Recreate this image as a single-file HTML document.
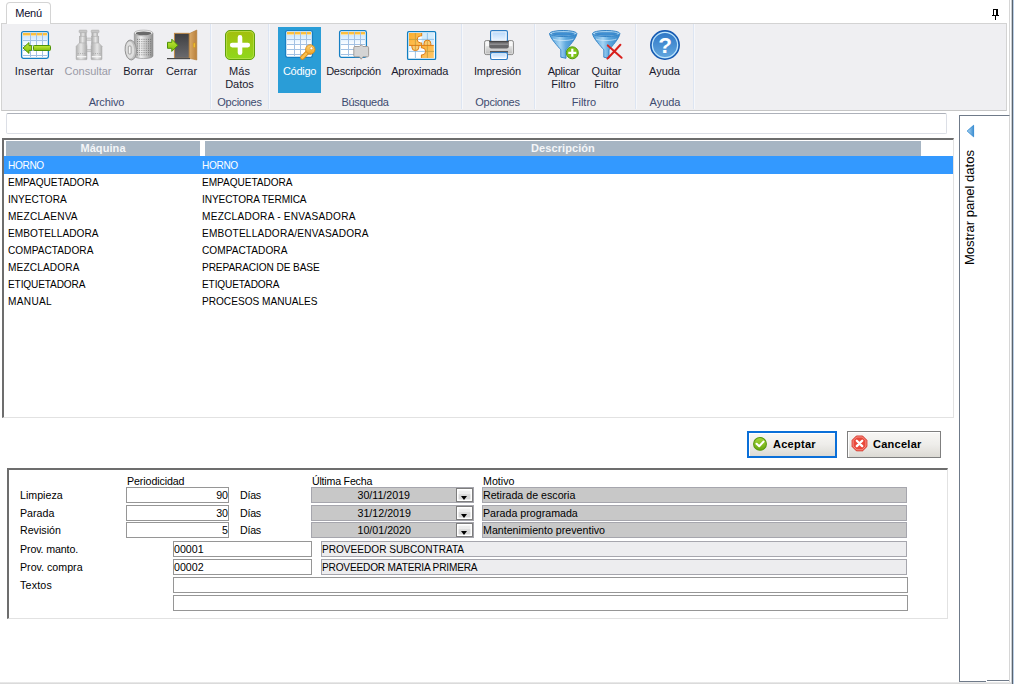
<!DOCTYPE html>
<html><head><meta charset="utf-8"><title>Máquinas</title>
<style>
html,body{margin:0;padding:0;}
body{width:1014px;height:684px;position:relative;overflow:hidden;background:#fff;font-family:"Liberation Sans",sans-serif;font-size:11px;color:#000;}
.abs{position:absolute;}
#tab{left:6px;top:2px;width:45px;height:22px;border:1px solid #d4d4d4;border-bottom:none;border-radius:4px 4px 0 0;background:#fff;box-sizing:border-box;z-index:2;}
#tab span{position:absolute;left:0;right:0;top:4px;text-align:center;font-size:11px;color:#0c0c2c;letter-spacing:-0.25px;}
#ribbon{left:1px;top:23px;width:1006px;height:88px;box-sizing:border-box;background:#efeff2;border:1px solid #d3d3d3;border-bottom:1px solid #c6c6c6;}
.rb{position:absolute;top:27px;height:66px;}
.rb .lbl{position:absolute;left:-20px;right:-20px;top:38px;text-align:center;line-height:13px;font-size:11px;color:#1a1a2e;white-space:nowrap;}
.rb svg{position:absolute;top:3px;left:50%;margin-left:-16px;}
.rb.sel{background:#2a9dd7;}
.rb.sel .lbl{color:#fff;}
.rb.dis .lbl{color:#9a9aa6;}
.gl{position:absolute;top:96px;height:13px;line-height:13px;font-size:11px;color:#3d4b70;text-align:center;white-space:nowrap;}
.sep{position:absolute;top:24px;height:85px;width:1px;background:#dde5f2;box-shadow:1px 0 0 #f6f7fa;}
#search{left:6px;top:113px;width:941px;height:21px;box-sizing:border-box;border:1px solid #dcdfe6;border-top-color:#adb1ba;border-radius:2px;background:#fff;}
#grid{left:2px;top:138px;width:952px;height:280px;box-sizing:border-box;border-left:2px solid #6d6d6d;border-top:2px solid #6d6d6d;border-bottom:1px solid #e2e2e2;border-right:1px solid #e2e2e2;background:#fff;}
.gh{position:absolute;top:141px;height:15px;background:#a6b5c3;color:#f4f6f8;font-weight:bold;font-size:11px;text-align:center;line-height:15px;letter-spacing:0.08px;}
.row{position:absolute;left:4px;width:949px;height:17px;line-height:19px;font-size:10.1px;white-space:nowrap;}
.row span{position:absolute;top:0;}
.row .c1{left:4px;} .row .c2{left:198px;}
.row.sel{background:#3399ff;color:#fff;}
.btn{position:absolute;top:431px;height:27px;box-sizing:border-box;border:1px solid #7f7f7f;background:linear-gradient(#f8f7f5,#eeedea 50%,#dcdad4);box-shadow:inset 1px 1px 0 #fff;font-weight:bold;font-size:11px;letter-spacing:0.27px;}
.btn span{position:absolute;top:6px;}
#panel{left:7px;top:468px;width:941px;height:151px;box-sizing:border-box;border-left:2px solid #6d6d6d;border-top:2px solid #6d6d6d;border-right:1px solid #e2e2e2;border-bottom:1px solid #e2e2e2;}
.t{position:absolute;white-space:nowrap;font-size:10.67px;line-height:13px;}
.in{position:absolute;box-sizing:border-box;height:16px;border:1px solid #969696;background:#fff;font-size:10.67px;line-height:15px;white-space:nowrap;}
.in.g{background:#c8c8c8;border-color:#a6a6ad;}
.in.l{background:#ededef;border-color:#a6a6ad;font-size:10.1px;}
.dd{position:absolute;right:0;top:0;width:17px;height:14px;background:linear-gradient(#efefef,#ececec 45%,#dadada 46%,#d6d6d6);border:1px solid #7e7e7e;box-shadow:inset 0 0 0 1.5px #fff;box-sizing:border-box;}
.dd:after{content:"";position:absolute;left:4px;top:7px;border-left:3.7px solid transparent;border-right:3.7px solid transparent;border-top:4px solid #000;}
#side{left:959px;top:115px;width:51px;height:567px;box-sizing:border-box;border:1px solid #6f7a89;border-right-color:#d6d6d6;border-bottom:none;background:#fff;}
#sidetxt{position:absolute;left:963px;top:265px;transform-origin:0 0;transform:rotate(-90deg);font-size:13px;white-space:nowrap;line-height:14px;}
</style></head><body>
<div id="tab" class="abs"><span>Menú</span></div>
<svg class="abs" style="left:990px;top:8px" width="12" height="14" viewBox="990 8 12 14" shape-rendering="crispEdges"><path d="M993 9h5v1h-5zM993 10h1v5h-1zM996 10h2v5h-2zM992 15h7v1h-7zM995 16h1v4h-1z" fill="#000"/></svg>
<div id="ribbon" class="abs"></div>

<div class="rb" style="left:13px;width:43px"><div class="lbl" style="letter-spacing:0.27px">Insertar</div></div>
<div class="rb dis" style="left:66px;width:44px"><div class="lbl">Consultar</div></div>
<div class="rb" style="left:117px;width:43px"><div class="lbl">Borrar</div></div>
<div class="rb" style="left:160px;width:43px"><div class="lbl">Cerrar</div></div>
<div class="rb" style="left:218px;width:43px"><div class="lbl">Más<br>Datos</div></div>
<div class="rb sel" style="left:278px;width:43px"><div class="lbl" style="letter-spacing:-0.3px">Código</div></div>
<div class="rb" style="left:332px;width:43px"><div class="lbl" style="letter-spacing:-0.25px">Descripción</div></div>
<div class="rb" style="left:398px;width:43px"><div class="lbl" style="letter-spacing:-0.16px;margin-left:0.5px">Aproximada</div></div>
<div class="rb" style="left:476px;width:43px"><div class="lbl" style="letter-spacing:-0.13px">Impresión</div></div>
<div class="rb" style="left:542px;width:43px"><div class="lbl"><span style="letter-spacing:-0.28px">Aplicar</span><br>Filtro</div></div>
<div class="rb" style="left:585px;width:43px"><div class="lbl">Quitar<br>Filtro</div></div>
<div class="rb" style="left:643px;width:43px"><div class="lbl">Ayuda</div></div>

<svg class="abs" style="left:0;top:0" width="1014" height="112" viewBox="0 0 1014 112">
<defs>
<linearGradient id="gCell" x1="0" y1="0" x2="0" y2="1"><stop offset="0" stop-color="#cfe8ff"/><stop offset="1" stop-color="#ffffff"/></linearGradient>
<linearGradient id="gGreen" x1="0" y1="0" x2="0" y2="1"><stop offset="0" stop-color="#a3bf0c"/><stop offset="1" stop-color="#8fd81c"/></linearGradient>
<linearGradient id="gArrow" x1="0" y1="0" x2="0" y2="1"><stop offset="0" stop-color="#c4e83a"/><stop offset="1" stop-color="#7fbf0a"/></linearGradient>
<linearGradient id="gGray" x1="0" y1="0" x2="1" y2="0"><stop offset="0" stop-color="#b0b0b0"/><stop offset="0.45" stop-color="#e6e6e6"/><stop offset="1" stop-color="#a8a8a8"/></linearGradient>
<linearGradient id="gCan" x1="0" y1="0" x2="1" y2="0"><stop offset="0" stop-color="#9a9a9a"/><stop offset="0.35" stop-color="#f2f2f2"/><stop offset="1" stop-color="#8e8e8e"/></linearGradient>
<linearGradient id="gDoor" x1="0" y1="0" x2="0" y2="1"><stop offset="0" stop-color="#3e3e40"/><stop offset="1" stop-color="#6a6a6e"/></linearGradient>
<linearGradient id="gWood" x1="0" y1="0" x2="1" y2="0"><stop offset="0" stop-color="#d9a968"/><stop offset="1" stop-color="#b9803c"/></linearGradient>
<linearGradient id="gFun" x1="0" y1="0" x2="1" y2="0"><stop offset="0" stop-color="#4a9ad7"/><stop offset="0.38" stop-color="#a6d4f3"/><stop offset="0.6" stop-color="#5fa9de"/><stop offset="1" stop-color="#3384c9"/></linearGradient>
<linearGradient id="gHelp" x1="0" y1="0" x2="0" y2="1"><stop offset="0" stop-color="#2b74c5"/><stop offset="1" stop-color="#66aae0"/></linearGradient>
<linearGradient id="gPrn" x1="0" y1="0" x2="0" y2="1"><stop offset="0" stop-color="#f4f4f4"/><stop offset="1" stop-color="#b8b8b8"/></linearGradient>
<linearGradient id="gPrn2" x1="0" y1="0" x2="0" y2="1"><stop offset="0" stop-color="#e4e4e4"/><stop offset="1" stop-color="#bdbdbd"/></linearGradient>
<linearGradient id="gPaper" x1="0" y1="0" x2="0" y2="1"><stop offset="0" stop-color="#b9d9fb"/><stop offset="1" stop-color="#eef6ff"/></linearGradient>
<linearGradient id="gOr" x1="0" y1="0" x2="1" y2="1"><stop offset="0" stop-color="#fdad2a"/><stop offset="1" stop-color="#fdc562"/></linearGradient>
<linearGradient id="gOr2" x1="0" y1="0" x2="1" y2="1"><stop offset="0" stop-color="#fdb036"/><stop offset="1" stop-color="#fdc86a"/></linearGradient>
<linearGradient id="gKey" x1="0" y1="0" x2="0" y2="1"><stop offset="0" stop-color="#ffd779"/><stop offset="1" stop-color="#f0a020"/></linearGradient>
<g id="tbl">
<rect x="0.6" y="0.6" width="26.8" height="26.8" rx="1.8" fill="#fff" stroke="#157fc4" stroke-width="1.3"/>
<rect x="2" y="5" width="24" height="10" fill="url(#gCell)"/>
<path d="M2 3.3h7M10 3.3h5M16 3.3h5M22 3.3h4" stroke="#fbbf3f" stroke-width="2.4"/>
<path d="M2 9.5h24M2 14.5h24M2 19.5h24M2 24.5h24" stroke="#a3c1e3" stroke-width="1"/>
<path d="M9.5 2v24M15.5 2v24M21.5 2v24" stroke="#a3c1e3" stroke-width="1"/>
</g>
<g id="funnel">
<path d="M0.6 3.8 C0.8 8 9.5 17 11.8 19.8 V27.2 L17 28.3 V19.8 C19.5 17 27.6 8 27.8 3.8Z" fill="url(#gFun)" stroke="#2f80c5" stroke-width="0.9"/>
<path d="M4 9 C8 11 20 11 24.5 9" fill="none" stroke="#d6ecfa" stroke-width="0.9" opacity="0.8"/>
<ellipse cx="14.2" cy="3.5" rx="13.6" ry="3" fill="#a9d5f2" stroke="#2f80c5" stroke-width="1"/>
<ellipse cx="14.2" cy="3.9" rx="11.2" ry="1.5" fill="#3f8fd2" stroke="#2a76bb" stroke-width="0.5"/>
</g>
</defs>
<!-- Insertar -->
<use href="#tbl" x="21" y="31"/>
<path d="M23 48 L29 42.6 V45.6 H31.6 V50.4 H29 V53.4Z" fill="url(#gArrow)" stroke="#4d9207" stroke-width="1" stroke-linejoin="round"/>
<rect x="33.5" y="45.5" width="17" height="5" rx="1" fill="url(#gArrow)" stroke="#4d9207"/>
<!-- Consultar (binoculars, disabled gray) -->
<g stroke="#acacac" stroke-width="0.5">
<rect x="86.4" y="38" width="5" height="2.3" fill="#d9d9d9"/><rect x="86.6" y="49.3" width="4.8" height="2.5" fill="#d9d9d9"/>
<g id="binoH">
<rect x="79" y="30.1" width="8" height="2.7" rx="0.8" fill="#c6c6c6"/>
<rect x="80.4" y="32.8" width="5.8" height="3.6" fill="url(#gGray)"/>
<rect x="79.3" y="36.2" width="7.2" height="6.9" fill="url(#gGray)"/>
<path d="M79.3 43 L76.1 46.3 V59 Q76.1 59.7 76.8 59.7 H86.3 Q87 59.7 87 59 V46.3 L86.5 43Z" fill="url(#gGray)"/>
<path d="M77 56.7h9.3" stroke="#f6f6f6" stroke-width="1.3"/>
<path d="M77.8 53.6h8" stroke="#a2a2a2" stroke-width="0.9" stroke-dasharray="0.9 1.3"/>
</g>
<use href="#binoH" transform="translate(178.1 0) scale(-1 1)"/>
</g>
<!-- Borrar (trash) -->
<g>
<path d="M134.3 33 V56 C134.3 59.4 153 59.4 153 56 V33Z" fill="url(#gCan)" stroke="#8c8c8c" stroke-width="0.6"/>
<g stroke="#5e5e5e" stroke-width="0.9" stroke-dasharray="0.9 1.3" opacity="0.8">
<path d="M137 39.4h15M137 41.6h15M137 43.8h15M137 46h15M137 48.2h15M137 50.4h15M137 52.6h15M137 54.8h15"/>
</g>
<ellipse cx="143.6" cy="33" rx="9.3" ry="2.9" fill="#f2f2f2" stroke="#9a9a9a" stroke-width="0.6"/>
<ellipse cx="143.6" cy="33.4" rx="7.8" ry="1.9" fill="#6a6a6a"/>
<ellipse cx="130.8" cy="50" rx="5.7" ry="10" fill="#bdbdbd" stroke="#8f8f8f" stroke-width="0.9" transform="rotate(-4 130.8 50)"/>
<ellipse cx="130" cy="50" rx="4.2" ry="8.4" fill="#dedede" transform="rotate(-4 130 50)"/>
<rect x="128.3" y="46" width="2.8" height="8" rx="0.9" fill="#f4f4f4" stroke="#8f8f8f" stroke-width="0.8"/>
</g>
<!-- Cerrar (door) -->
<g>
<rect x="174.4" y="33.3" width="14.8" height="25" fill="url(#gDoor)" stroke="#c4893f" stroke-width="0.9"/>
<path d="M189.5 33.5 L196.8 30 V60 L189.5 58.3Z" fill="url(#gWood)" stroke="#b07a36" stroke-width="0.6"/>
<rect x="193.3" y="43" width="1.8" height="4.4" fill="#f6c435" stroke="#c9951c" stroke-width="0.5"/>
<path d="M167 58.6h23" stroke="#4a4a4a" stroke-width="1.2"/>
<path d="M167.5 42.3 H171.8 V39.2 L177.8 45.3 L171.8 51.4 V48.3 H167.5Z" fill="url(#gArrow)" stroke="#4d9207" stroke-width="1" stroke-linejoin="round"/>
</g>
<!-- Mas Datos -->
<rect x="225.5" y="30.5" width="29" height="29" rx="4.5" fill="url(#gGreen)" stroke="#5f9f0e"/>
<rect x="226.5" y="31.5" width="27" height="27" rx="3.5" fill="none" stroke="#c3e45a" stroke-opacity="0.6"/>
<path d="M240 37.2v15.6M232.2 45.1h15.6" stroke="#fff" stroke-width="4.6" stroke-linecap="round"/>
<!-- Codigo -->
<use href="#tbl" x="285" y="30"/>
<g>
<path d="M302.3 57.6 L308 51.8" stroke="#d98a14" stroke-width="4.4" stroke-linecap="round"/>
<path d="M302.3 57.6 L308 51.8" stroke="#fbc04e" stroke-width="2.6" stroke-linecap="round"/>
<circle cx="310.3" cy="49.5" r="4.7" fill="url(#gKey)" stroke="#d98a14" stroke-width="0.9"/>
<circle cx="311.4" cy="48.3" r="1.5" fill="#fff" stroke="#d98a14" stroke-width="0.6"/>
</g>
<!-- Descripcion -->
<use href="#tbl" x="339" y="30"/>
<path d="M355 46.5 H359.5 L361.2 44.6 L362.9 46.5 H367.4 Q368.6 46.5 368.6 47.7 V55.6 Q368.6 56.8 367.4 56.8 H362.9 L361.2 59.2 L359.5 56.8 H355 Q353.8 56.8 353.8 55.6 V47.7 Q353.8 46.5 355 46.5Z" fill="#d4d4d4" stroke="#9b9591" stroke-width="0.9"/>
<!-- Aproximada (puzzle) -->
<g>
<rect x="407.6" y="31.6" width="28" height="27.8" rx="1.2" fill="#fff" stroke="#0f7ec1" stroke-width="1.3"/>
<rect x="421.7" y="33" width="12.1" height="12.4" fill="#d3ecfc"/>
<rect x="409" y="45.4" width="12.4" height="4" fill="#eaf5fe"/>
<path d="M415.4 33v25M427.4 33v25M409 39.4h25M409 51.4h25" stroke="#8dbde6" stroke-width="0.9"/>
<path d="M409 33 H421.7 V35.9 H420.7 A3.5 3.5 0 0 0 420.7 42.9 H421.7 V45.4 H409Z" fill="url(#gOr)"/>
<path d="M418.9 45.4 V47.1 A3.5 3.5 0 0 1 411.9 47.1 V45.4Z" fill="#fdca6e"/>
<path d="M433.8 57.9 H421.4 V54.9 H422.1 A3.5 3.5 0 0 0 422.1 47.9 H421.4 V45.4 H433.8Z" fill="url(#gOr2)"/>
<path d="M424 45.4 V43.5 A3.4 3.4 0 0 1 430.8 43.5 V45.4Z" fill="#fdca6e"/>
<path d="M415.4 33v17M409 39.4h8.5M427.4 40.6v17.4M425.6 51.4h8.4" stroke="#b79a3c" stroke-width="0.9" opacity="0.75"/>
<path d="M421.7 33 V35.9 H420.7 A3.5 3.5 0 0 0 420.7 42.9 H421.7 V45.4 H409 M418.9 45.4 V47.1 A3.5 3.5 0 0 1 411.9 47.1 V45.4" fill="none" stroke="#dc7c12" stroke-width="1"/>
<path d="M421.4 57.9 V54.9 H422.1 A3.5 3.5 0 0 0 422.1 47.9 H421.4 V45.4 H433.8 M424 45.4 V43.5 A3.4 3.4 0 0 1 430.8 43.5 V45.4" fill="none" stroke="#dc7c12" stroke-width="1"/>
</g>
<!-- Impresion (printer) -->
<g>
<rect x="484.6" y="40.6" width="28.8" height="14" rx="1.6" fill="#f7f7f7" stroke="#7b7b7b" stroke-width="0.9"/>
<rect x="485.6" y="46" width="26.8" height="7.6" fill="url(#gPrn2)"/>
<rect x="490.6" y="30.6" width="16.8" height="11" rx="1.4" fill="#fff" stroke="#2e7cc4" stroke-width="1.2"/>
<rect x="492.3" y="32.3" width="13.4" height="8.7" fill="url(#gPaper)"/>
<path d="M489.2 41 H508.8 V46.5 Q508.8 48.5 506.8 48.5 H491.2 Q489.2 48.5 489.2 46.5Z" fill="#666668"/>
<path d="M489.4 44.2h19.2" stroke="#8f8f91" stroke-width="1.6"/>
<path d="M489.2 41.4h19.6" stroke="#3e3e40" stroke-width="0.9"/>
<path d="M490 51.9h18" stroke="#4a4a4c" stroke-width="1.6"/>
<rect x="490.6" y="52.7" width="16.8" height="6.8" rx="1.4" fill="#fff" stroke="#2e7cc4" stroke-width="1.2"/>
<rect x="492.3" y="54.2" width="13.4" height="3.8" fill="url(#gPaper)"/>
</g>
<!-- Aplicar filtro -->
<use href="#funnel" x="549" y="30"/>
<circle cx="572.3" cy="52.8" r="6" fill="#7fc31a" stroke="#4f9a0c" stroke-width="1"/>
<path d="M572.3 48.8v8M568.3 52.8h8" stroke="#fff" stroke-width="2.2"/>
<!-- Quitar filtro -->
<use href="#funnel" x="592" y="30"/>
<path d="M607.8 45.4 L621.6 57.8M620.4 44.8 C616 49.5 612 54 607.4 58.6" stroke="#d8201d" stroke-width="2" stroke-linecap="round" fill="none"/>
<!-- Ayuda -->
<circle cx="665" cy="45" r="14.2" fill="url(#gHelp)" stroke="#1659b1" stroke-width="1.5"/>
<circle cx="665" cy="45" r="12.6" fill="none" stroke="#bfe5fc" stroke-width="1.2"/>
<text x="665" y="53.4" text-anchor="middle" font-family="Liberation Sans, sans-serif" font-weight="bold" font-size="22.5" fill="#fff">?</text>
</svg>

<div class="gl" style="left:66.5px;width:80px;letter-spacing:-0.15px">Archivo</div>
<div class="gl" style="left:199.5px;width:80px;letter-spacing:-0.25px">Opciones</div>
<div class="gl" style="left:325px;width:80px;letter-spacing:-0.3px">Búsqueda</div>
<div class="gl" style="left:457.5px;width:80px;letter-spacing:-0.25px">Opciones</div>
<div class="gl" style="left:544px;width:80px">Filtro</div>
<div class="gl" style="left:625px;width:80px">Ayuda</div>
<div class="sep" style="left:210px"></div>
<div class="sep" style="left:268px"></div>
<div class="sep" style="left:461px"></div>
<div class="sep" style="left:534px"></div>
<div class="sep" style="left:635px"></div>
<div class="sep" style="left:693px"></div>

<div id="search" class="abs"></div>
<div id="grid" class="abs"></div>
<div class="gh" style="left:6px;width:194px">Máquina</div>
<div class="gh" style="left:205px;width:716px">Descripción</div>
<div class="row sel" style="top:156px;height:18px"><span class="c1" style="letter-spacing:-0.350px">HORNO</span><span class="c2" style="letter-spacing:-0.350px">HORNO</span></div>
<div class="row" style="top:173px"><span class="c1" style="letter-spacing:-0.030px">EMPAQUETADORA</span><span class="c2" style="letter-spacing:-0.040px">EMPAQUETADORA</span></div>
<div class="row" style="top:190px"><span class="c1" style="letter-spacing:0.000px">INYECTORA</span><span class="c2" style="letter-spacing:-0.100px">INYECTORA TERMICA</span></div>
<div class="row" style="top:207px"><span class="c1" style="letter-spacing:0.210px">MEZCLAENVA</span><span class="c2" style="letter-spacing:0.255px">MEZCLADORA - ENVASADORA</span></div>
<div class="row" style="top:224px"><span class="c1" style="letter-spacing:0.070px">EMBOTELLADORA</span><span class="c2" style="letter-spacing:0.200px">EMBOTELLADORA/ENVASADORA</span></div>
<div class="row" style="top:241px"><span class="c1" style="letter-spacing:0.045px">COMPACTADORA</span><span class="c2" style="letter-spacing:0.050px">COMPACTADORA</span></div>
<div class="row" style="top:258px"><span class="c1" style="letter-spacing:0.140px">MEZCLADORA</span><span class="c2" style="letter-spacing:-0.090px">PREPARACION DE BASE</span></div>
<div class="row" style="top:275px"><span class="c1" style="letter-spacing:-0.130px">ETIQUETADORA</span><span class="c2" style="letter-spacing:-0.130px">ETIQUETADORA</span></div>
<div class="row" style="top:292px"><span class="c1" style="letter-spacing:0.320px">MANUAL</span><span class="c2" style="letter-spacing:0.000px">PROCESOS MANUALES</span></div>

<div class="btn" style="left:747px;width:90px;border:2px solid #0a6fd8;"><svg class="abs" style="left:3px;top:2px" width="18" height="18" viewBox="0 0 18 18"><defs><linearGradient id="gOk" x1="0" y1="0" x2="0" y2="1"><stop offset="0" stop-color="#a6d63a"/><stop offset="1" stop-color="#68a80e"/></linearGradient></defs><circle cx="8" cy="8.9" r="6.4" fill="url(#gOk)" stroke="#5a9a12" stroke-width="1.1"/><path d="M4.6 8.8 L7.2 11.2 L11.5 6.6" fill="none" stroke="#fff" stroke-width="2.1" stroke-linecap="round" stroke-linejoin="round"/></svg><span style="left:24px;top:5px">Aceptar</span></div>
<div class="btn" style="left:847px;width:94px"><svg class="abs" style="left:3px;top:2px" width="20" height="20" viewBox="0 0 20 20"><path d="M5.4 1.9 H11.6 L16 6.3 V12.5 L11.6 16.9 H5.4 L1 12.5 V6.3Z" fill="#e9493b" stroke="#d43a2e" stroke-width="0.8"/><path d="M5.7 3 H11.3 L14.9 6.6 V12.2 L11.3 15.8 H5.7 L2.1 12.2 V6.6Z" fill="none" stroke="#f7a59c" stroke-width="0.8"/><path d="M5.8 6.7 L11.2 12.1 M11.2 6.7 L5.8 12.1" stroke="#fff" stroke-width="2.3" stroke-linecap="round"/></svg><span style="left:25px;top:6px">Cancelar</span></div>

<div id="panel" class="abs"></div>
<div class="t" style="left:127px;top:475px;letter-spacing:-0.1px">Periodicidad</div>
<div class="t" style="left:312px;top:475px;letter-spacing:-0.22px">Última Fecha</div>
<div class="t" style="left:483px;top:475px">Motivo</div>
<div class="t" style="left:20px;top:489px">Limpieza</div>
<div class="t" style="left:20px;top:507px">Parada</div>
<div class="t" style="left:20px;top:524px">Revisión</div>
<div class="t" style="left:20px;top:543px;letter-spacing:-0.13px">Prov. manto.</div>
<div class="t" style="left:20px;top:561px">Prov. compra</div>
<div class="t" style="left:20px;top:579px;letter-spacing:0.2px">Textos</div>
<div class="t" style="left:240px;top:489px;letter-spacing:-0.25px">Días</div>
<div class="t" style="left:240px;top:507px;letter-spacing:-0.25px">Días</div>
<div class="t" style="left:240px;top:524px;letter-spacing:-0.25px">Días</div>

<div class="in" style="left:126px;top:487px;width:103px;text-align:right;padding-right:0">90</div>
<div class="in" style="left:126px;top:505px;width:103px;text-align:right;padding-right:0">30</div>
<div class="in" style="left:126px;top:522px;width:103px;text-align:right;padding-right:0">5</div>
<div class="in g" style="left:311px;top:487px;width:163px"><span class="abs" style="left:45.5px">30/11/2019</span><div class="dd"></div></div>
<div class="in g" style="left:311px;top:505px;width:163px"><span class="abs" style="left:45.5px">31/12/2019</span><div class="dd"></div></div>
<div class="in g" style="left:311px;top:522px;width:163px"><span class="abs" style="left:45.5px">10/01/2020</span><div class="dd"></div></div>
<div class="in g" style="left:482px;top:487px;width:425px;padding-left:0">Retirada de escoria</div>
<div class="in g" style="left:482px;top:505px;width:425px;padding-left:0">Parada programada</div>
<div class="in g" style="left:482px;top:522px;width:425px;padding-left:0">Mantenimiento preventivo</div>
<div class="in" style="left:173px;top:541px;width:139px;padding-left:0">00001</div>
<div class="in" style="left:173px;top:559px;width:139px;padding-left:0">00002</div>
<div class="in l" style="left:321px;top:541px;width:586px;padding-left:0">PROVEEDOR SUBCONTRATA</div>
<div class="in l" style="left:321px;top:559px;width:586px;padding-left:0;letter-spacing:-0.17px">PROVEEDOR MATERIA PRIMERA</div>
<div class="in" style="left:173px;top:577px;width:735px"></div>
<div class="in" style="left:173px;top:595px;width:735px"></div>

<div id="side" class="abs"></div>
<svg class="abs" style="left:965px;top:123px" width="12" height="16" viewBox="965 123 12 16"><defs><linearGradient id="gTri" x1="0" y1="0" x2="1" y2="0"><stop offset="0" stop-color="#b4d9f2"/><stop offset="1" stop-color="#3f90d2"/></linearGradient></defs><path d="M973.6 125.3 V136.8 L967.2 131Z" fill="url(#gTri)" stroke="#2f88d0" stroke-width="0.9" stroke-linejoin="round"/></svg>
<div class="abs" style="left:959px;top:681px;width:27px;height:1px;background:#6f7a89"></div>
<div class="abs" style="left:987px;top:680px;width:22px;height:1px;background:#6f7a89"></div>
<div id="sidetxt">Mostrar panel datos</div>
<div class="abs" style="left:1009px;top:0;width:1px;height:115px;background:#d6d6d6"></div>
<div class="abs" style="left:1011px;top:0;width:3px;height:684px;background:linear-gradient(90deg,#c9ced3 0,#c9ced3 33%,#59646f 33%,#59646f 67%,#bccfe6 67%)"></div>
<div class="abs" style="left:0;top:682px;width:1011px;height:2px;background:linear-gradient(#eeeeee,#d4d4d4)"></div>
</body></html>
